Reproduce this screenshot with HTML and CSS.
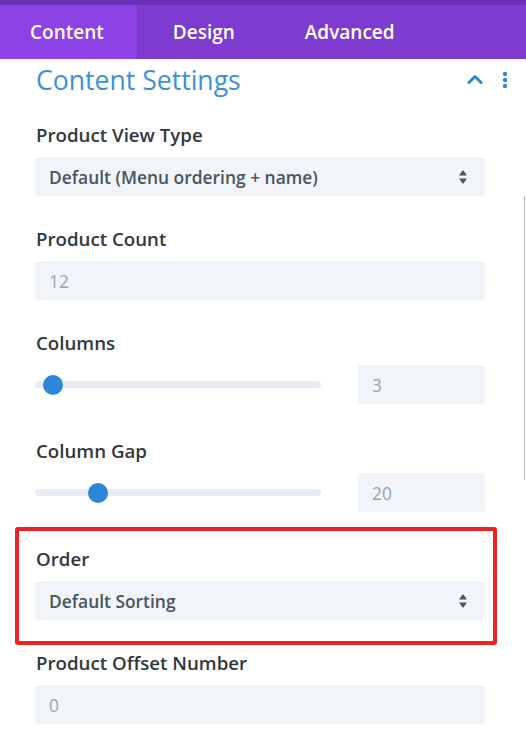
FILE: index.html
```html
<!DOCTYPE html>
<html>
<head>
<meta charset="utf-8">
<link rel="stylesheet" href="styles.css">
</head>
<body>
<div class="panel">
  <div class="topstrip"></div>
  <nav class="tabs">
    <div class="tab active">Content</div>
    <div class="tab">Design</div>
    <div class="tab">Advanced</div>
  </nav>
  <div class="scrollbar"></div>
  <div class="section-head">
    <h2 class="section-title">Content Settings</h2>
    <div class="head-icons">
      <svg class="chev" width="16" height="10" viewBox="0 0 16 10"><path d="M2 8.5 L8 2.5 L14 8.5" fill="none" stroke="#2b87da" stroke-width="3" stroke-linecap="round" stroke-linejoin="round"/></svg>
      <svg class="dots" width="6" height="18" viewBox="0 0 6 18"><circle cx="3" cy="3" r="2.2" fill="#2b87da"/><circle cx="3" cy="9" r="2.2" fill="#2b87da"/><circle cx="3" cy="15" r="2.2" fill="#2b87da"/></svg>
    </div>
  </div>
  <div class="fields">
    <div class="field">
      <div class="label">Product View Type</div>
      <div class="select">
        <span>Default (Menu ordering + name)</span>
        <svg class="arrows" width="10" height="16" viewBox="0 0 10 16"><path d="M5 1 L9 6.5 H1 Z M5 15 L9 9.5 H1 Z" fill="#4a5360"/></svg>
      </div>
    </div>
    <div class="field">
      <div class="label">Product Count</div>
      <div class="input">12</div>
    </div>
    <div class="field field-slider">
      <div class="label">Columns</div>
      <div class="slider-row">
        <div class="track"><div class="thumb" style="left: 8px"></div></div>
        <div class="input num">3</div>
      </div>
    </div>
    <div class="field field-last">
      <div class="label">Column Gap</div>
      <div class="slider-row">
        <div class="track"><div class="thumb" style="left: 53px"></div></div>
        <div class="input num">20</div>
      </div>
    </div>
    <div class="highlight">
      <div class="field field-last">
        <div class="label">Order</div>
        <div class="select">
          <span>Default Sorting</span>
          <svg class="arrows" width="10" height="16" viewBox="0 0 10 16"><path d="M5 1 L9 6.5 H1 Z M5 15 L9 9.5 H1 Z" fill="#4a5360"/></svg>
        </div>
      </div>
    </div>
    <div class="field">
      <div class="label">Product Offset Number</div>
      <div class="input">0</div>
    </div>
  </div>
</div>
</body>
</html>
```
FILE: styles.css
```css
* { box-sizing: border-box; }
html, body { margin: 0; padding: 0; background: #fff; }
body { font-family: "Open Sans", "Noto Sans", sans-serif; width: 526px; height: 738px; overflow: hidden; }
.panel { position: relative; width: 526px; height: 738px; overflow: hidden; }
.topstrip { height: 5px; background: #6b2fb8; }
.tabs { display: flex; height: 54px; background: #7e3bd0; }
.tab { display: flex; align-items: center; padding: 0 34px 0 36px; color: #fff; font-size: 19px; font-weight: 600; }
.tab.active { background: #8c42e4; padding: 0 33px 0 30px; }
.scrollbar { position: absolute; left: 524px; top: 196px; width: 1px; height: 284px; background: #b9b9b9; }
.section-head { display: flex; align-items: center; justify-content: space-between; height: 42px; margin-bottom: 22px; padding: 0 18px 0 36px; }
.section-title { margin: 0; font-size: 26.6px; font-weight: 400; color: #3d8fdc; line-height: 42px; }
.head-icons { display: flex; align-items: center; gap: 19px; }
.chev { display: block; margin-top: -2px; }
.dots { display: block; }
.fields { padding: 0 41px 0 35px; }
.field { margin-bottom: 31px; }
.field.field-slider { margin-bottom: 35px; }
.field.field-last { margin-bottom: 0; }
.label { height: 24px; line-height: 24px; font-size: 18.7px; font-weight: 600; color: #32373c; margin-bottom: 10px; padding-left: 1px; }
.select, .input { height: 39px; background: #f1f5f9; border-radius: 3px; display: flex; align-items: center; padding: 0 14px; font-size: 17.4px; }
.select { justify-content: space-between; color: #4a5360; font-weight: 600; padding-right: 17px; }
.input { color: #9aa4b0; }
.slider-row { display: flex; align-items: center; justify-content: space-between; }
.track { position: relative; width: 286px; height: 7px; background: #e8edf4; border-radius: 4px; }
.thumb { position: absolute; top: -6.5px; width: 20px; height: 20px; border-radius: 50%; background: #2b87da; }
.input.num { width: 127px; }
.highlight { margin: 15px -12px 6px -20px; border: 4px solid #ee2326; border-radius: 3px; padding: 16px 8px 21px 16px; }
```
